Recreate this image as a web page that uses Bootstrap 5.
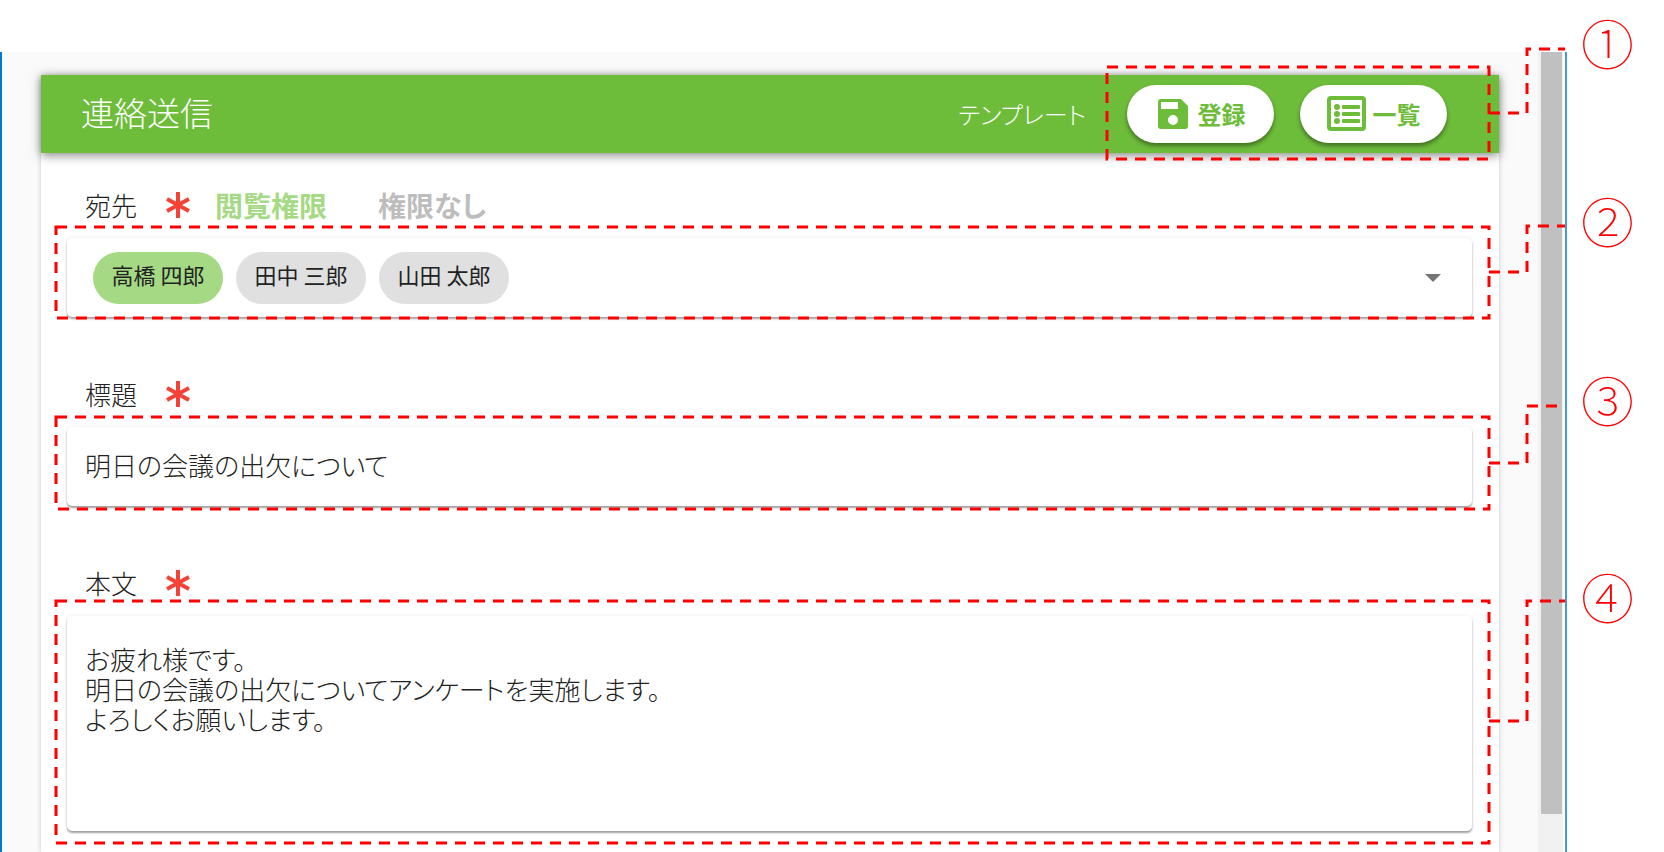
<!DOCTYPE html>
<html lang="ja">
<head>
<meta charset="utf-8">
<meta name="viewport" content="width=device-width, initial-scale=1">
<title>連絡送信</title>
<link rel="stylesheet" href="https://cdn.jsdelivr.net/npm/bootstrap@5.3.0/dist/css/bootstrap.min.css">
<style>
  body, input, textarea, button {
    font-family: "Noto Sans CJK JP", sans-serif;
    font-feature-settings: "palt";
  }
  body { background: #fff; color: #222; font-weight: 300; line-height: 32px; padding-top: 52px; }
  .app-window {
    min-height: calc(100vh - 52px);
    margin-right: 97px;
    border-left: 2px solid #0078d7;
    border-right: 2px solid #4399dd;
    background: #fafafa;
  }
  .page-area { padding: 23px 39px 0; }
  .sheet { background: #fff; box-shadow: 0 1px 5px rgba(0,0,0,.2); }
  .sheet-bar {
    height: 78px; padding: 0 10px 0 40px; background: #6dbc3a; color: #fff;
    box-shadow: 0 2px 10px rgba(0,0,0,.5);
  }
  .sheet-title { font-size: 33px; font-weight: 300; padding-bottom: 2px; }
  .bar-note { font-size: 24px; margin-right: 21px; }
  .bar-actions { gap: 26px; padding: 0 42px 0 20px; }
  .pill {
    width: 147px; height: 58px; border: 0; border-radius: 29px; padding: 0;
    background: #fff; color: #6dbc3a; font-size: 24px; font-weight: 700;
    box-shadow: 0 3px 4px rgba(0,0,0,.4);
  }
  .fields { padding: 36px 27px 20px 26px; gap: 61px; }
  .field-head { font-size: 26px; padding-left: 18px; margin-bottom: 17px; height: 32px; }
  .required { width: 26px; height: 28px; margin: 0 24px 0 28px; }
  .legend-on, .legend-off { font-size: 28px; font-weight: 700; }
  .legend-on { color: #a5d984; margin-right: 51px; }
  .legend-off { color: #bdbdbd; }
  .paper {
    display: block; width: 100%; border: 0; border-radius: 5px; background: #fff; color: #222;
    box-shadow: 0 2px 2px rgba(0,0,0,.35), 0 0 4px rgba(0,0,0,.08);
    font-size: 26px; font-weight: 300; line-height: 30px; outline: 0;
  }
  .paper-row { height: 79px; padding: 0 18px 4px; }
  .paper-area { height: 215px; padding: 28px 18px; resize: none; overflow: hidden; }
  .people { gap: 13px; padding: 0 26px; }
  .chip { width: 130px; height: 52px; border-radius: 26px; padding-bottom: 8px; background: #e0e0e0; font-size: 22px; font-weight: 400; }
  .chip-on { background: #a5d984; }
  .caret-btn { border: 0; background: none; padding: 0 5px; line-height: 0; }
  .scroll-track { width: 27px; background: #f1f1f1; padding: 0 1px 0 3px; border-right: 2px solid #fff; }
  .scroll-thumb { height: 95.25%; background: #c0c0c0; }

  /* dashed guides and their numbers lie over the form */
  .guide { position: absolute; pointer-events: none; z-index: 2; }
  .guide-actions { inset: -8px 0 -6px; }
  .guide-people { inset: -11px -17px -1px -11px; }
  .guide-subject { inset: -10px -17px -3px -11px; }
  .guide-message { inset: -15px -17px -12px -11px; }
  .guide svg { position: absolute; overflow: visible; }
  .guide-box { inset: 0; width: 100%; height: 100%; }
  .guide-line { left: 100%; top: 0; width: 76px; height: 10px; }
  .guide rect, .guide path { fill: none; stroke: #f00; stroke-width: 3; stroke-dasharray: 11 8; }
  .guide-no { position: absolute; left: calc(100% + 92px); width: 53px; font-size: 53px; font-weight: 100; line-height: 54px; color: #f00; font-feature-settings: normal; text-align: center; }
  .guide-actions .guide-no { top: -52px; }
  .guide-people .guide-no { top: -34px; }
  .guide-subject .guide-no { top: -45px; }
  .guide-message .guide-no { top: -32px; }
</style>
</head>
<body>
<div class="app-window d-flex">
  <main class="page-area d-flex flex-grow-1">
    <form class="sheet flex-grow-1">
      <header class="sheet-bar d-flex align-items-center">
        <h1 class="sheet-title m-0 me-auto">連絡送信</h1>
        <span class="bar-note">テンプレート</span>
        <div class="bar-actions d-flex align-items-center align-self-stretch position-relative">
          <button type="button" class="pill d-flex align-items-center justify-content-center">
            <svg class="me-2" width="34" height="34" viewBox="0 0 34 34" aria-hidden="true"><path fill="#6dbc3a" fill-rule="evenodd" d="M5 2H25L32 9V29a3 3 0 0 1-3 3H5a3 3 0 0 1-3-3V5a3 3 0 0 1 3-3ZM5 5V12H22V5ZM17 18a5 5 0 1 0 0 10a5 5 0 0 0 0-10Z"/></svg>登録
          </button>
          <button type="button" class="pill d-flex align-items-center justify-content-center">
            <svg class="me-1" width="42" height="36" viewBox="0 0 42 36" aria-hidden="true"><rect x="2" y="2" width="35" height="31" rx="2" fill="none" stroke="#6dbc3a" stroke-width="4"/><g fill="#6dbc3a"><circle cx="10" cy="11" r="3"/><circle cx="10" cy="18" r="3"/><circle cx="10" cy="25" r="3"/><rect x="15" y="9" width="18" height="4" rx="1"/><rect x="15" y="16" width="18" height="4" rx="1"/><rect x="15" y="23" width="18" height="4" rx="1"/></g></svg>一覧
          </button>
          <div class="guide guide-actions">
            <svg class="guide-box"><rect width="100%" height="100%"/></svg>
            <svg class="guide-line"><path d="M0 46H38V-18H76"/></svg>
            <span class="guide-no">①</span>
          </div>
        </div>
      </header>

      <div class="fields d-flex flex-column">
        <section>
          <div class="field-head d-flex align-items-center">
            <span id="people-label">宛先</span>
            <svg class="required" viewBox="0 0 26 28" aria-hidden="true"><path d="M13 1V27M2 8L24 20M24 8L2 20" stroke="#f44336" stroke-width="4"/></svg>
            <span class="legend-on">閲覧権限</span>
            <span class="legend-off">権限なし</span>
          </div>
          <div class="position-relative">
            <div class="paper paper-row people d-flex align-items-center" role="group" aria-labelledby="people-label">
              <span class="chip chip-on d-flex align-items-center justify-content-center">高橋 四郎</span>
              <span class="chip d-flex align-items-center justify-content-center">田中 三郎</span>
              <span class="chip d-flex align-items-center justify-content-center">山田 太郎</span>
              <button type="button" class="caret-btn ms-auto" aria-label="宛先を選択"><svg width="16" height="8" viewBox="0 0 16 8"><path d="M0 0H16L8 8Z" fill="#757575"/></svg></button>
            </div>
            <div class="guide guide-people">
              <svg class="guide-box"><rect width="100%" height="100%"/></svg>
              <svg class="guide-line"><path d="M0 45H38V-1H76"/></svg>
              <span class="guide-no">②</span>
            </div>
          </div>
        </section>

        <section>
          <div class="field-head d-flex align-items-center">
            <label for="subject">標題</label>
            <svg class="required" viewBox="0 0 26 28" aria-hidden="true"><path d="M13 1V27M2 8L24 20M24 8L2 20" stroke="#f44336" stroke-width="4"/></svg>
          </div>
          <div class="position-relative">
            <input id="subject" type="text" class="paper paper-row" value="明日の会議の出欠について">
            <div class="guide guide-subject">
              <svg class="guide-box"><rect width="100%" height="100%"/></svg>
              <svg class="guide-line"><path d="M0 46H38V-11H76"/></svg>
              <span class="guide-no">③</span>
            </div>
          </div>
        </section>

        <section>
          <div class="field-head d-flex align-items-center">
            <label for="message">本文</label>
            <svg class="required" viewBox="0 0 26 28" aria-hidden="true"><path d="M13 1V27M2 8L24 20M24 8L2 20" stroke="#f44336" stroke-width="4"/></svg>
          </div>
          <div class="position-relative">
            <textarea id="message" class="paper paper-area">お疲れ様です。
明日の会議の出欠についてアンケートを実施します。
よろしくお願いします。</textarea>
            <div class="guide guide-message">
              <svg class="guide-box"><rect width="100%" height="100%"/></svg>
              <svg class="guide-line"><path d="M0 120H38V0H76"/></svg>
              <span class="guide-no">④</span>
            </div>
          </div>
        </section>
      </div>
    </form>
  </main>
  <div class="scroll-track" aria-hidden="true"><div class="scroll-thumb"></div></div>
</div>
<script src="https://cdn.jsdelivr.net/npm/bootstrap@5.3.0/dist/js/bootstrap.bundle.min.js"></script>
</body>
</html>
